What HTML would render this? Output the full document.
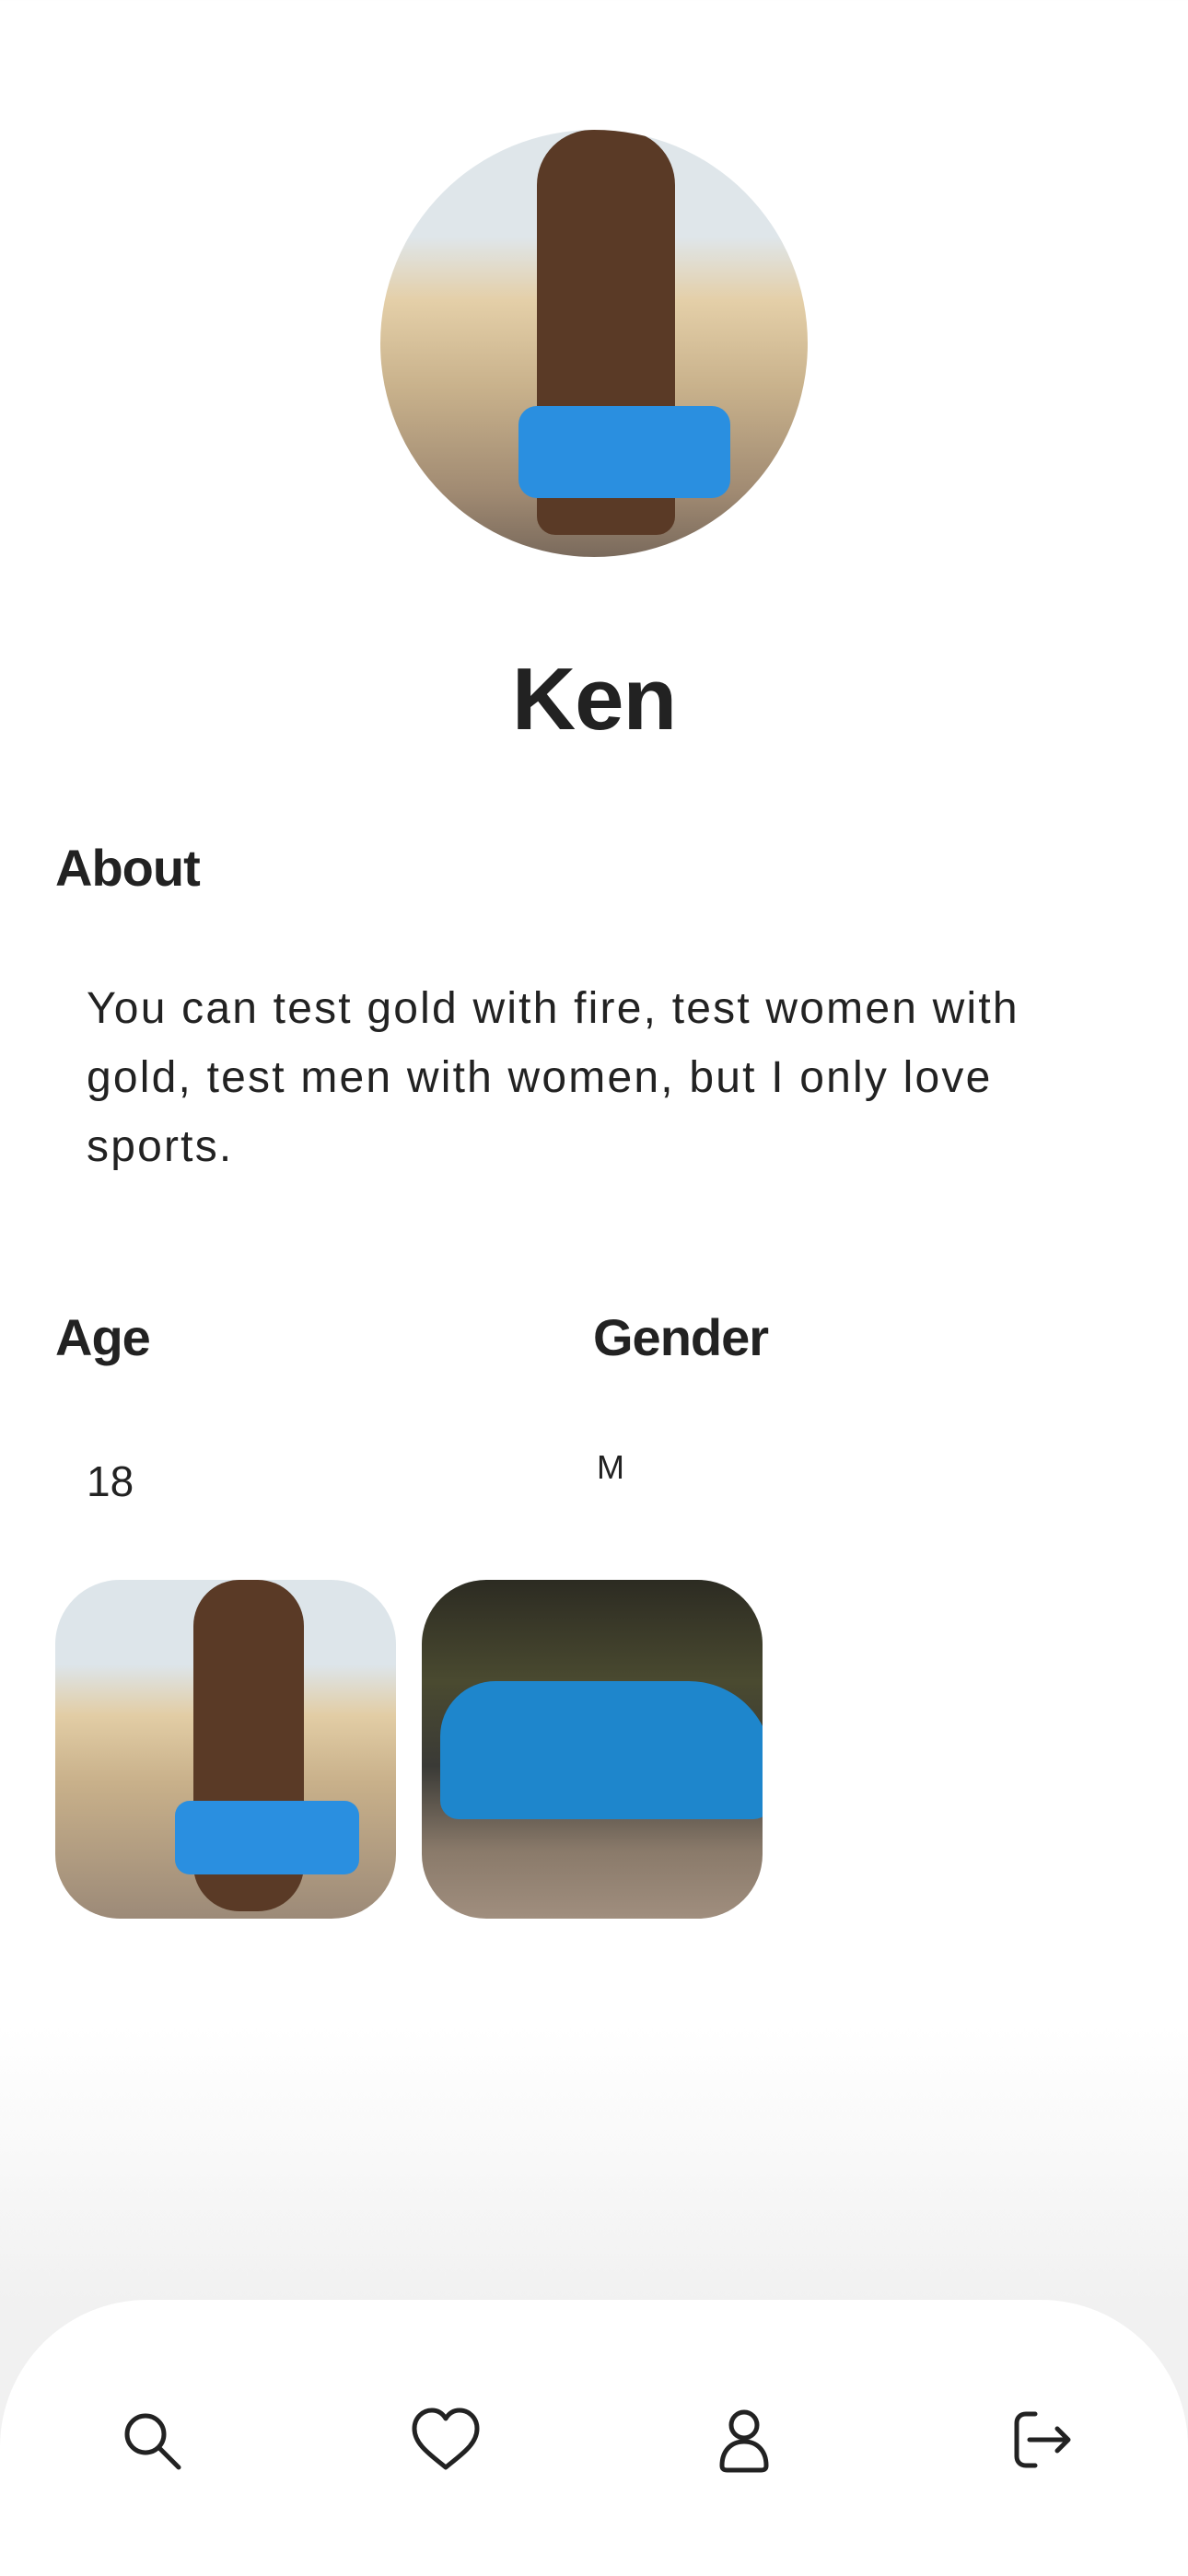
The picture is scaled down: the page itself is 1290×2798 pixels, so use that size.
<!DOCTYPE html>
<html><head><meta charset="utf-8"><style>
body{margin:0;width:1290px;height:2796px;position:relative;overflow:hidden;font-family:"Liberation Sans",sans-serif;color:#222;background:linear-gradient(#fff 0,#fff 2200px,#f1f1f1 2500px)}
.abs{position:absolute}
.av{left:413px;top:141px;width:464px;height:464px;border-radius:50%;overflow:hidden;background:linear-gradient(#dfe6ea 0,#dfe6ea 25%,#e4cfa8 40%,#c9b28c 60%,#a08a72 85%,#7a6a5c 100%)}
.ph{top:1716px;width:370px;height:368px;border-radius:70px;overflow:hidden}
.hd{font-size:56px;font-weight:bold;letter-spacing:-1px}
</style></head><body>
<div class="abs av">
 <div class="abs" style="left:170px;top:0;width:150px;height:440px;background:#5a3a26;border-radius:60px 60px 20px 20px"></div>
 <div class="abs" style="left:150px;top:300px;width:230px;height:100px;background:#2a8fe0;border-radius:20px"></div>
</div>
<div class="abs" style="left:0;width:1290px;top:705px;text-align:center;font-size:96px;font-weight:bold;letter-spacing:-1px">Ken</div>
<div class="abs hd" style="left:60px;top:910px">About</div>
<div class="abs" style="left:94px;top:1058px;width:1180px;font-size:48px;line-height:75px;letter-spacing:2.2px">You can test gold with fire, test women with<br>gold, test men with women, but I only love<br>sports.</div>
<div class="abs hd" style="left:60px;top:1420px">Age</div>
<div class="abs hd" style="left:644px;top:1420px">Gender</div>
<div class="abs" style="left:94px;top:1582px;font-size:46px">18</div>
<div class="abs" style="left:648px;top:1573px;font-size:36px">M</div>
<div class="abs ph" style="left:60px;background:linear-gradient(#dde5ea 0,#dde5ea 25%,#e2cda5 40%,#c8b08a 60%,#9c8a78 100%)">
 <div class="abs" style="left:150px;top:0;width:120px;height:360px;background:#5a3a26;border-radius:50px"></div>
 <div class="abs" style="left:130px;top:240px;width:200px;height:80px;background:#2a8fe0;border-radius:16px"></div>
</div>
<div class="abs ph" style="left:458px;background:linear-gradient(#2c2b22 0,#4a4a30 30%,#3a3a36 55%,#8a7a6a 80%,#a08e7e 100%)">
 <div class="abs" style="left:20px;top:110px;width:360px;height:150px;background:#1e86cc;border-radius:60px 90px 20px 20px"></div>
</div>
<div class="abs" style="left:0;top:2498px;width:1290px;height:300px;background:#fff;border-radius:160px 160px 0 0"></div>
<svg class="abs" style="left:0;top:2610px" width="1290" height="80" fill="none" stroke="#222" stroke-width="5" stroke-linecap="round" stroke-linejoin="round">
 <circle cx="158" cy="34" r="20"/><path d="M173 49l21 21"/>
 <path d="M484 70C470 58 450 46 450 28c0-12 9-20 19-20 7 0 12 4 15 9 3-5 8-9 15-9 10 0 19 8 19 20 0 18-20 30-34 42z"/>
 <circle cx="808" cy="24" r="14"/><path d="M784 68c0-16 10-26 24-26s24 10 24 26c0 4-2 5-6 5h-36c-4 0-6-1-6-5z"/>
 <path d="M1124 12h-10c-6 0-10 4-10 10v36c0 6 4 10 10 10h10"/><path d="M1118 40h42M1148 28l12 12-12 12"/>
</svg>
</body></html>
